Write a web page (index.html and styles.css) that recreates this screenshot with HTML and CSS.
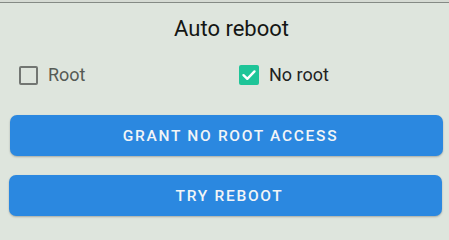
FILE: index.html
```html
<!DOCTYPE html>
<html lang="en">
<head>
<meta charset="utf-8">
<title>Auto reboot</title>
<link rel="stylesheet" href="styles.css">
</head>
<body>
<div class="top-edge"></div>
<main class="panel">
  <h1 class="title">Auto reboot</h1>
  <div class="options">
    <label class="option">
      <span class="box"></span>
      <span class="label muted">Root</span>
    </label>
    <label class="option">
      <span class="box checked">
        <svg viewBox="0 0 20 20" width="20" height="20"><path d="M4.5 10.2 L8.3 13.8 L15.5 6.4" fill="none" stroke="#ffffff" stroke-width="2.4" stroke-linecap="round" stroke-linejoin="round"/></svg>
      </span>
      <span class="label">No root</span>
    </label>
  </div>
  <button class="btn btn-first">GRANT NO ROOT ACCESS</button>
  <button class="btn btn-second">TRY REBOOT</button>
</main>
</body>
</html>
```

FILE: styles.css
```css
html, body {
  margin: 0;
  padding: 0;
}
body {
  width: 449px;
  height: 226px;
  overflow: hidden;
  background: #dee5dd;
  font-family: Roboto, "Noto Sans", "Liberation Sans", sans-serif;
}
.top-edge {
  height: 2px;
  background: #d6dbd4;
  border-bottom: 1px solid #858a85;
}
.panel {
  display: flex;
  flex-direction: column;
}
.title {
  margin: 12px 0 0 0;
  font-size: 22px;
  line-height: 28px;
  font-weight: 400;
  color: #141614;
  text-align: center;
  padding-left: 14px;
}
.options {
  display: grid;
  grid-template-columns: 220px 1fr;
  padding-left: 19px;
  margin-top: 22px;
}
.option {
  display: flex;
  align-items: center;
  gap: 10px;
  height: 20px;
}
.box {
  box-sizing: border-box;
  width: 19px;
  height: 19px;
  border: 2px solid #727672;
  border-radius: 2px;
  display: flex;
  align-items: center;
  justify-content: center;
}
.box.checked {
  width: 20px;
  height: 20px;
  border: none;
  background: #1ec598;
}
.label {
  font-size: 18px;
  line-height: 20px;
  color: #1f221f;
}
.label.muted {
  color: #555a55;
}
.btn {
  display: block;
  width: 433px;
  height: 41px;
  margin-left: 10px;
  border: none;
  border-radius: 7px;
  background: #2b88e0;
  color: #f2f5f7;
  font-family: Roboto, "Noto Sans", "Liberation Sans", sans-serif;
  font-size: 15.5px;
  font-weight: 500;
  letter-spacing: 1.7px;
  padding: 0 0 0 8px;
  box-shadow: 0 1px 2px rgba(0, 0, 0, 0.25);
}
.btn-first {
  margin-top: 30px;
}
.btn-second {
  margin-top: 19px;
  margin-left: 9px;
}
```
